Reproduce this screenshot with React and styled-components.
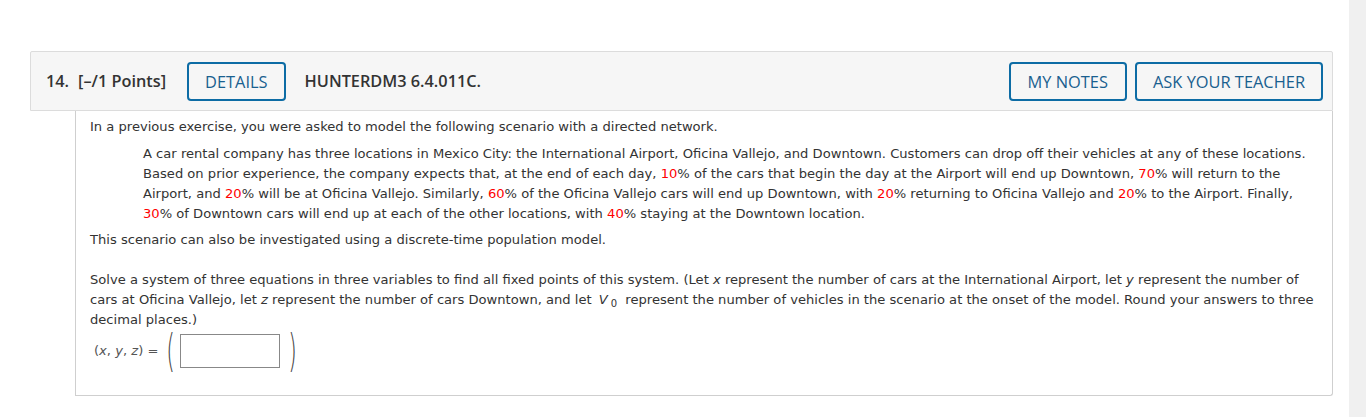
import React from "react";
import styled, { createGlobalStyle } from "styled-components";

const GlobalStyle = createGlobalStyle`
  html, body {
    margin: 0;
    padding: 0;
    background: #fff;
  }
  body {
    font-family: "DejaVu Sans", Verdana, sans-serif;
    color: #333;
  }
`;

const Page = styled.div`
  display: flex;
  height: 417px;
  overflow: hidden;
`;

const Main = styled.div`
  flex: 1;
  padding: 51px 16px 0 30px;
`;

const Gutter = styled.div`
  width: 17px;
  background: #f0f0f0;
`;

const Header = styled.div`
  display: flex;
  align-items: center;
  height: 58px;
  padding: 0 9px 0 15px;
  background: #f6f6f6;
  border: 1px solid #dcdcdc;
  border-radius: 2px 2px 0 0;
  font-family: "Open Sans", sans-serif;
  font-weight: 600;
  font-size: 16.3px;
  color: #333;
`;

const Num = styled.span`
  margin-right: 9px;
`;

const Points = styled.span`
  margin-right: 21px;
`;

const Code = styled.span`
  margin-left: 19px;
  flex: 1;
`;

const OutlineButton = styled.button`
  height: 39px;
  padding: 0 ${(p) => p.$pad || 16}px;
  margin-left: ${(p) => p.$gap || 0}px;
  background: transparent;
  border: 2px solid #0d6ca5;
  border-radius: 4px;
  color: #19608f;
  font-family: "Open Sans", sans-serif;
  font-weight: 500;
  font-size: 16.4px;
  cursor: pointer;
`;

const Body = styled.div`
  margin-left: 45px;
  height: 285px;
  box-sizing: border-box;
  padding: 6px 15px 0 14px;
  border: 1px solid #cfcfcf;
  border-top: none;
  border-radius: 0 0 3px 0;
  font-size: 13.1px;
  line-height: 20px;
  color: #333;
`;

const Para = styled.p`
  margin: 0 0 ${(p) => p.$after || 0}px;
`;

const Quote = styled.p`
  margin: 7px 0 6px 53px;
`;

const Pct = styled.span`
  color: #f00;
`;

const Var = styled.i`
  font-style: italic;
  margin: 0 ${(p) => p.$space || 0}px;
`;

const Sub = styled.sub`
  font-size: 10px;
  line-height: 0;
  vertical-align: -3px;
  margin-right: 4px;
`;

const AnswerRow = styled.div`
  display: flex;
  align-items: center;
  height: 44px;
  margin: -1px 0 0 4px;
  color: #555;
  white-space: pre;
`;

const Paren = styled.span`
  font-family: "DejaVu Sans", sans-serif;
  font-weight: 300;
  font-size: 44px;
  line-height: 44px;
  color: #444;
  transform: scaleX(0.5);
  display: inline-block;
  margin: 0 ${(p) => p.$right || 0}px 0 ${(p) => p.$left || 0}px;
`;

const Box = styled.input`
  width: 100px;
  height: 34px;
  box-sizing: border-box;
  border: 1px solid #888;
  padding: 0 4px;
  font-size: 13px;
`;

export default function App() {
  return (
    <>
      <GlobalStyle />
      <Page>
        <Main>
          <Header>
            <Num>14.</Num>
            <Points>[–/1 Points]</Points>
            <OutlineButton $pad={16}>DETAILS</OutlineButton>
            <Code>HUNTERDM3 6.4.011C.</Code>
            <OutlineButton $pad={17}>MY NOTES</OutlineButton>
            <OutlineButton $pad={16} $gap={8}>
              ASK YOUR TEACHER
            </OutlineButton>
          </Header>
          <Body>
            <Para>
              In a previous exercise, you were asked to model the following
              scenario with a directed network.
            </Para>
            <Quote>
              A car rental company has three locations in Mexico City: the
              International Airport, Oficina Vallejo, and Downtown. Customers
              can drop off their vehicles at any of these locations. Based on
              prior experience, the company expects that, at the end of each
              day, <Pct>10</Pct>% of the cars that begin the day at the Airport
              will end up Downtown, <Pct>70</Pct>% will return to the Airport,
              and <Pct>20</Pct>% will be at Oficina Vallejo. Similarly,{" "}
              <Pct>60</Pct>% of the Oficina Vallejo cars will end up Downtown,
              with <Pct>20</Pct>% returning to Oficina Vallejo and{" "}
              <Pct>20</Pct>% to the Airport. Finally, <Pct>30</Pct>% of
              Downtown cars will end up at each of the other locations, with{" "}
              <Pct>40</Pct>% staying at the Downtown location.
            </Quote>
            <Para $after={20}>
              This scenario can also be investigated using a discrete-time
              population model.
            </Para>
            <Para>
              Solve a system of three equations in three variables to find all
              fixed points of this system. (Let <Var>x</Var> represent the
              number of cars at the International Airport, let <Var>y</Var>{" "}
              represent the number of cars at Oficina Vallejo, let{" "}
              <Var>z</Var> represent the number of cars Downtown, and let{" "}
              <Var $space={3}>V</Var>
              <Sub>0</Sub> represent the number of vehicles in the scenario at
              the onset of the model. Round your answers to three decimal
              places.)
            </Para>
            <AnswerRow>
              {"("}
              <Var>x</Var>
              {", "}
              <Var>y</Var>
              {", "}
              <Var>z</Var>
              {") ="}
              <Paren $left={4} $right={0}>
                (
              </Paren>
              <Box type="text" />
              <Paren $left={4}>)</Paren>
            </AnswerRow>
          </Body>
        </Main>
        <Gutter />
      </Page>
    </>
  );
}
